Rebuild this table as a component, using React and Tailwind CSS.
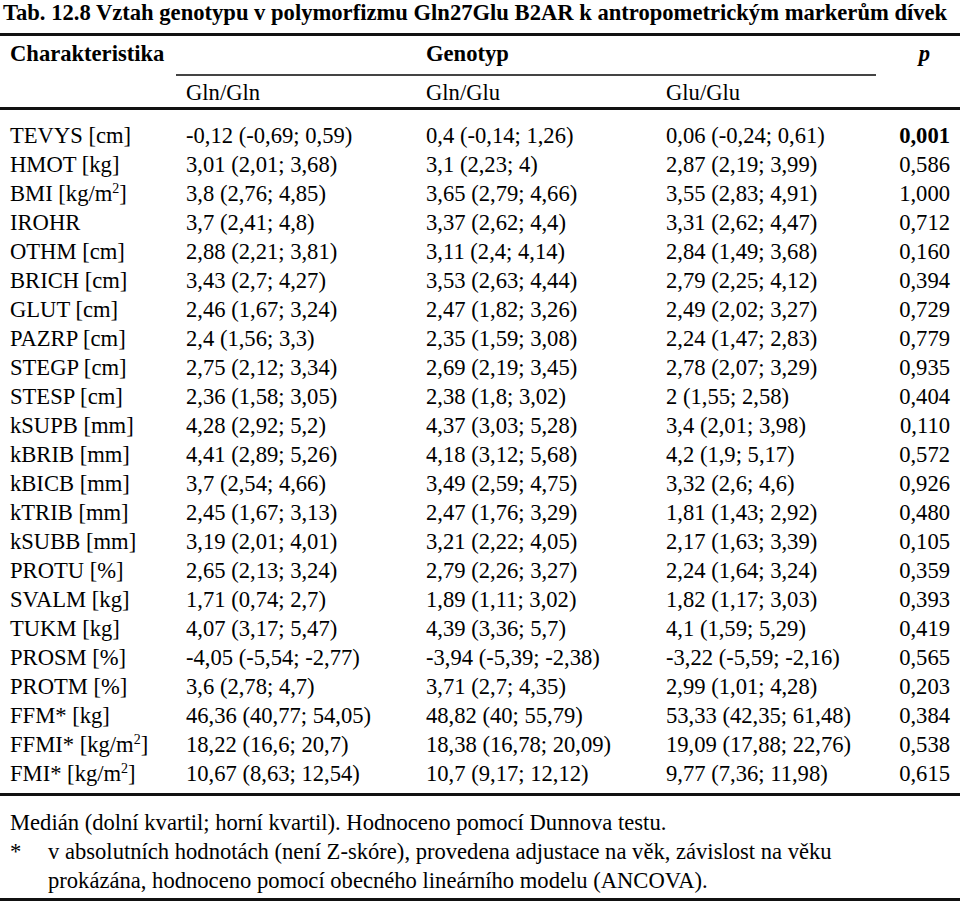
const rows = [
  ['TEVYS [cm]', '-0,12 (-0,69; 0,59)', '0,4 (-0,14; 1,26)', '0,06 (-0,24; 0,61)', '0,001', true],
  ['HMOT [kg]', '3,01 (2,01; 3,68)', '3,1 (2,23; 4)', '2,87 (2,19; 3,99)', '0,586'],
  ['BMI [kg/m^2]', '3,8 (2,76; 4,85)', '3,65 (2,79; 4,66)', '3,55 (2,83; 4,91)', '1,000'],
  ['IROHR', '3,7 (2,41; 4,8)', '3,37 (2,62; 4,4)', '3,31 (2,62; 4,47)', '0,712'],
  ['OTHM [cm]', '2,88 (2,21; 3,81)', '3,11 (2,4; 4,14)', '2,84 (1,49; 3,68)', '0,160'],
  ['BRICH [cm]', '3,43 (2,7; 4,27)', '3,53 (2,63; 4,44)', '2,79 (2,25; 4,12)', '0,394'],
  ['GLUT [cm]', '2,46 (1,67; 3,24)', '2,47 (1,82; 3,26)', '2,49 (2,02; 3,27)', '0,729'],
  ['PAZRP [cm]', '2,4 (1,56; 3,3)', '2,35 (1,59; 3,08)', '2,24 (1,47; 2,83)', '0,779'],
  ['STEGP [cm]', '2,75 (2,12; 3,34)', '2,69 (2,19; 3,45)', '2,78 (2,07; 3,29)', '0,935'],
  ['STESP [cm]', '2,36 (1,58; 3,05)', '2,38 (1,8; 3,02)', '2 (1,55; 2,58)', '0,404'],
  ['kSUPB [mm]', '4,28 (2,92; 5,2)', '4,37 (3,03; 5,28)', '3,4 (2,01; 3,98)', '0,110'],
  ['kBRIB [mm]', '4,41 (2,89; 5,26)', '4,18 (3,12; 5,68)', '4,2 (1,9; 5,17)', '0,572'],
  ['kBICB [mm]', '3,7 (2,54; 4,66)', '3,49 (2,59; 4,75)', '3,32 (2,6; 4,6)', '0,926'],
  ['kTRIB [mm]', '2,45 (1,67; 3,13)', '2,47 (1,76; 3,29)', '1,81 (1,43; 2,92)', '0,480'],
  ['kSUBB [mm]', '3,19 (2,01; 4,01)', '3,21 (2,22; 4,05)', '2,17 (1,63; 3,39)', '0,105'],
  ['PROTU [%]', '2,65 (2,13; 3,24)', '2,79 (2,26; 3,27)', '2,24 (1,64; 3,24)', '0,359'],
  ['SVALM [kg]', '1,71 (0,74; 2,7)', '1,89 (1,11; 3,02)', '1,82 (1,17; 3,03)', '0,393'],
  ['TUKM [kg]', '4,07 (3,17; 5,47)', '4,39 (3,36; 5,7)', '4,1 (1,59; 5,29)', '0,419'],
  ['PROSM [%]', '-4,05 (-5,54; -2,77)', '-3,94 (-5,39; -2,38)', '-3,22 (-5,59; -2,16)', '0,565'],
  ['PROTM [%]', '3,6 (2,78; 4,7)', '3,71 (2,7; 4,35)', '2,99 (1,01; 4,28)', '0,203'],
  ['FFM* [kg]', '46,36 (40,77; 54,05)', '48,82 (40; 55,79)', '53,33 (42,35; 61,48)', '0,384'],
  ['FFMI* [kg/m^2]', '18,22 (16,6; 20,7)', '18,38 (16,78; 20,09)', '19,09 (17,88; 22,76)', '0,538'],
  ['FMI* [kg/m^2]', '10,67 (8,63; 12,54)', '10,7 (9,17; 12,12)', '9,77 (7,36; 11,98)', '0,615'],
];

// "kg/m^2" -> kg/m with a superscript 2
const Label = ({ text }) => {
  if (!text.includes('^2')) return text;
  const [a, b] = text.split('^2');
  return (
    <>
      {a}
      <sup className="text-[14px] top-[-8px]">2</sup>
      {b}
    </>
  );
};

export default function App() {
  return (
    <div className="w-[960px] h-[904px] bg-white text-black font-['Liberation_Serif','Times_New_Roman',serif] text-[22.6px] leading-[29px] overflow-hidden">
      <h1 className="font-bold pl-[3px] leading-[25px] whitespace-nowrap">
        Tab. 12.8 Vztah genotypu v polymorfizmu Gln27Glu B2AR k antropometrickým markerům dívek
      </h1>

      <div className="mt-[8px] border-t-[3px] border-[#111]">
        {/* header */}
        <div className="grid grid-cols-[176px_240px_240px_220px_1fr] border-b-[3px] border-[#111]">
          <div className="row-span-2 pl-[10px] pt-[3px] font-bold">Charakteristika</div>
          <div className="col-span-3 h-[40px] pt-[3px] border-b-2 border-[#444]">
            <div className="grid grid-cols-[240px_240px_220px]">
              <div />
              <div className="pl-[10px] font-bold">Genotyp</div>
            </div>
          </div>
          <div className="row-span-2 pt-[3px] pr-[30px] text-right font-bold italic">p</div>
          <div className="pl-[10px] pt-[2px] h-[29px]">Gln/Gln</div>
          <div className="pl-[10px] pt-[2px]">Gln/Glu</div>
          <div className="pl-[10px] pt-[2px]">Glu/Glu</div>
        </div>

        {/* body */}
        <div className="pt-[11px] pb-[5px] border-b-[3px] border-[#111]">
          {rows.map(([label, a, b, c, p, bold]) => (
            <div key={label} className="grid grid-cols-[176px_240px_240px_220px_1fr] h-[29px] whitespace-nowrap">
              <div className="pl-[10px]"><Label text={label} /></div>
              <div className="pl-[10px]">{a}</div>
              <div className="pl-[10px]">{b}</div>
              <div className="pl-[10px]">{c}</div>
              <div className={`pr-[10px] text-right ${bold ? 'font-bold' : ''}`}>{p}</div>
            </div>
          ))}
        </div>

        {/* notes */}
        <div className="pt-[12px] pb-[3px] border-b-[3px] border-[#111] pl-[10px]">
          <p>Medián (dolní kvartil; horní kvartil). Hodnoceno pomocí Dunnova testu.</p>
          <div className="grid grid-cols-[38px_1fr]">
            <span>*</span>
            <p>
              v absolutních hodnotách (není Z-skóre), provedena adjustace na věk, závislost na věku
              <br />
              prokázána, hodnoceno pomocí obecného lineárního modelu (ANCOVA).
            </p>
          </div>
        </div>
      </div>
    </div>
  );
}
